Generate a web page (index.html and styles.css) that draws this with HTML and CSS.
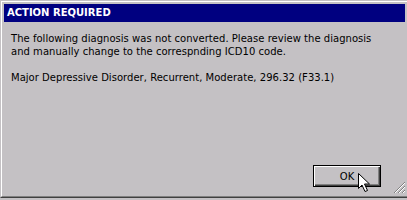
FILE: index.html
```html
<!DOCTYPE html>
<html>
<head>
<meta charset="utf-8">
<link rel="stylesheet" href="styles.css">
</head>
<body>
<div class="window">
  <div class="frame">
    <div class="titlebar">ACTION REQUIRED</div>
    <div class="content">
      <p class="msg">The following diagnosis was not converted. Please review the diagnosis<br>and manually change to the correspnding ICD10 code.</p>
      <p class="msg diag">Major Depressive Disorder, Recurrent, Moderate, 296.32 (F33.1)</p>
      <div class="actions">
        <button class="btn">OK</button>
      </div>
    </div>
    <svg class="grip" width="12" height="12" viewBox="0 0 12 12">
      <path d="M11 0 L0 11 M11 4 L4 11 M11 8 L8 11" stroke="#808080" stroke-width="1" fill="none" shape-rendering="crispEdges"/>
      <path d="M11 1 L1 11 M11 5 L5 11 M11 9 L9 11" stroke="#ffffff" stroke-width="1" fill="none" shape-rendering="crispEdges"/>
    </svg>
  </div>
  <svg class="cursor" width="14" height="21" viewBox="0 0 14 21">
    <path d="M1.5 1.5 L1.5 16.5 L5 13 L8 19.5 L10.5 18.5 L7.5 12 L12.5 12 Z" fill="#ffffff" stroke="#000000" stroke-width="1" stroke-linejoin="miter"/>
  </svg>
</div>
</body>
</html>
```
FILE: styles.css
```css
html, body {
  margin: 0;
  padding: 0;
  background: #c4c1c4;
  overflow: hidden;
}
.window {
  position: relative;
  width: 409px;
  height: 198px;
  box-sizing: border-box;
  border-top: 1px solid #c4c1c4;
  border-left: 1px solid #c4c1c4;
  border-right: 1px solid #404040;
  border-bottom: 1px solid #404040;
  font-family: "DejaVu Sans", Verdana, sans-serif;
  font-size: 10px;
  color: #000;
}
.frame {
  position: relative;
  height: 100%;
  box-sizing: border-box;
  border-top: 1px solid #ffffff;
  border-left: 1px solid #ffffff;
  border-right: 1px solid #808080;
  border-bottom: 1px solid #808080;
  padding: 2px;
  display: flex;
  flex-direction: column;
}
.titlebar {
  height: 18px;
  line-height: 18px;
  background: #000080;
  color: #ffffff;
  font-weight: bold;
  font-size: 10px;
  padding-left: 3px;
}
.content {
  flex: 1;
  display: flex;
  flex-direction: column;
  padding: 10px 24px 7px 7px;
}
.msg {
  margin: 0;
  line-height: 13px;
  letter-spacing: 0.03px;
}
.diag {
  margin-top: 13px;
}
.actions {
  margin-top: auto;
  display: flex;
  justify-content: flex-end;
}
.btn {
  width: 68px;
  height: 22px;
  box-sizing: border-box;
  margin: 0;
  padding: 0;
  background: #c4c1c4;
  border: 1px solid #000000;
  box-shadow: inset 1px 1px 0 #ffffff, inset -1px -1px 0 #404040, inset -2px -2px 0 #808080;
  font-family: "DejaVu Sans", Verdana, sans-serif;
  font-size: 10px;
  color: #000;
  padding-top: 1px;
}
.grip {
  position: absolute;
  right: 1px;
  bottom: 2px;
}
.cursor {
  position: absolute;
  left: 356px;
  top: 171px;
}
```
